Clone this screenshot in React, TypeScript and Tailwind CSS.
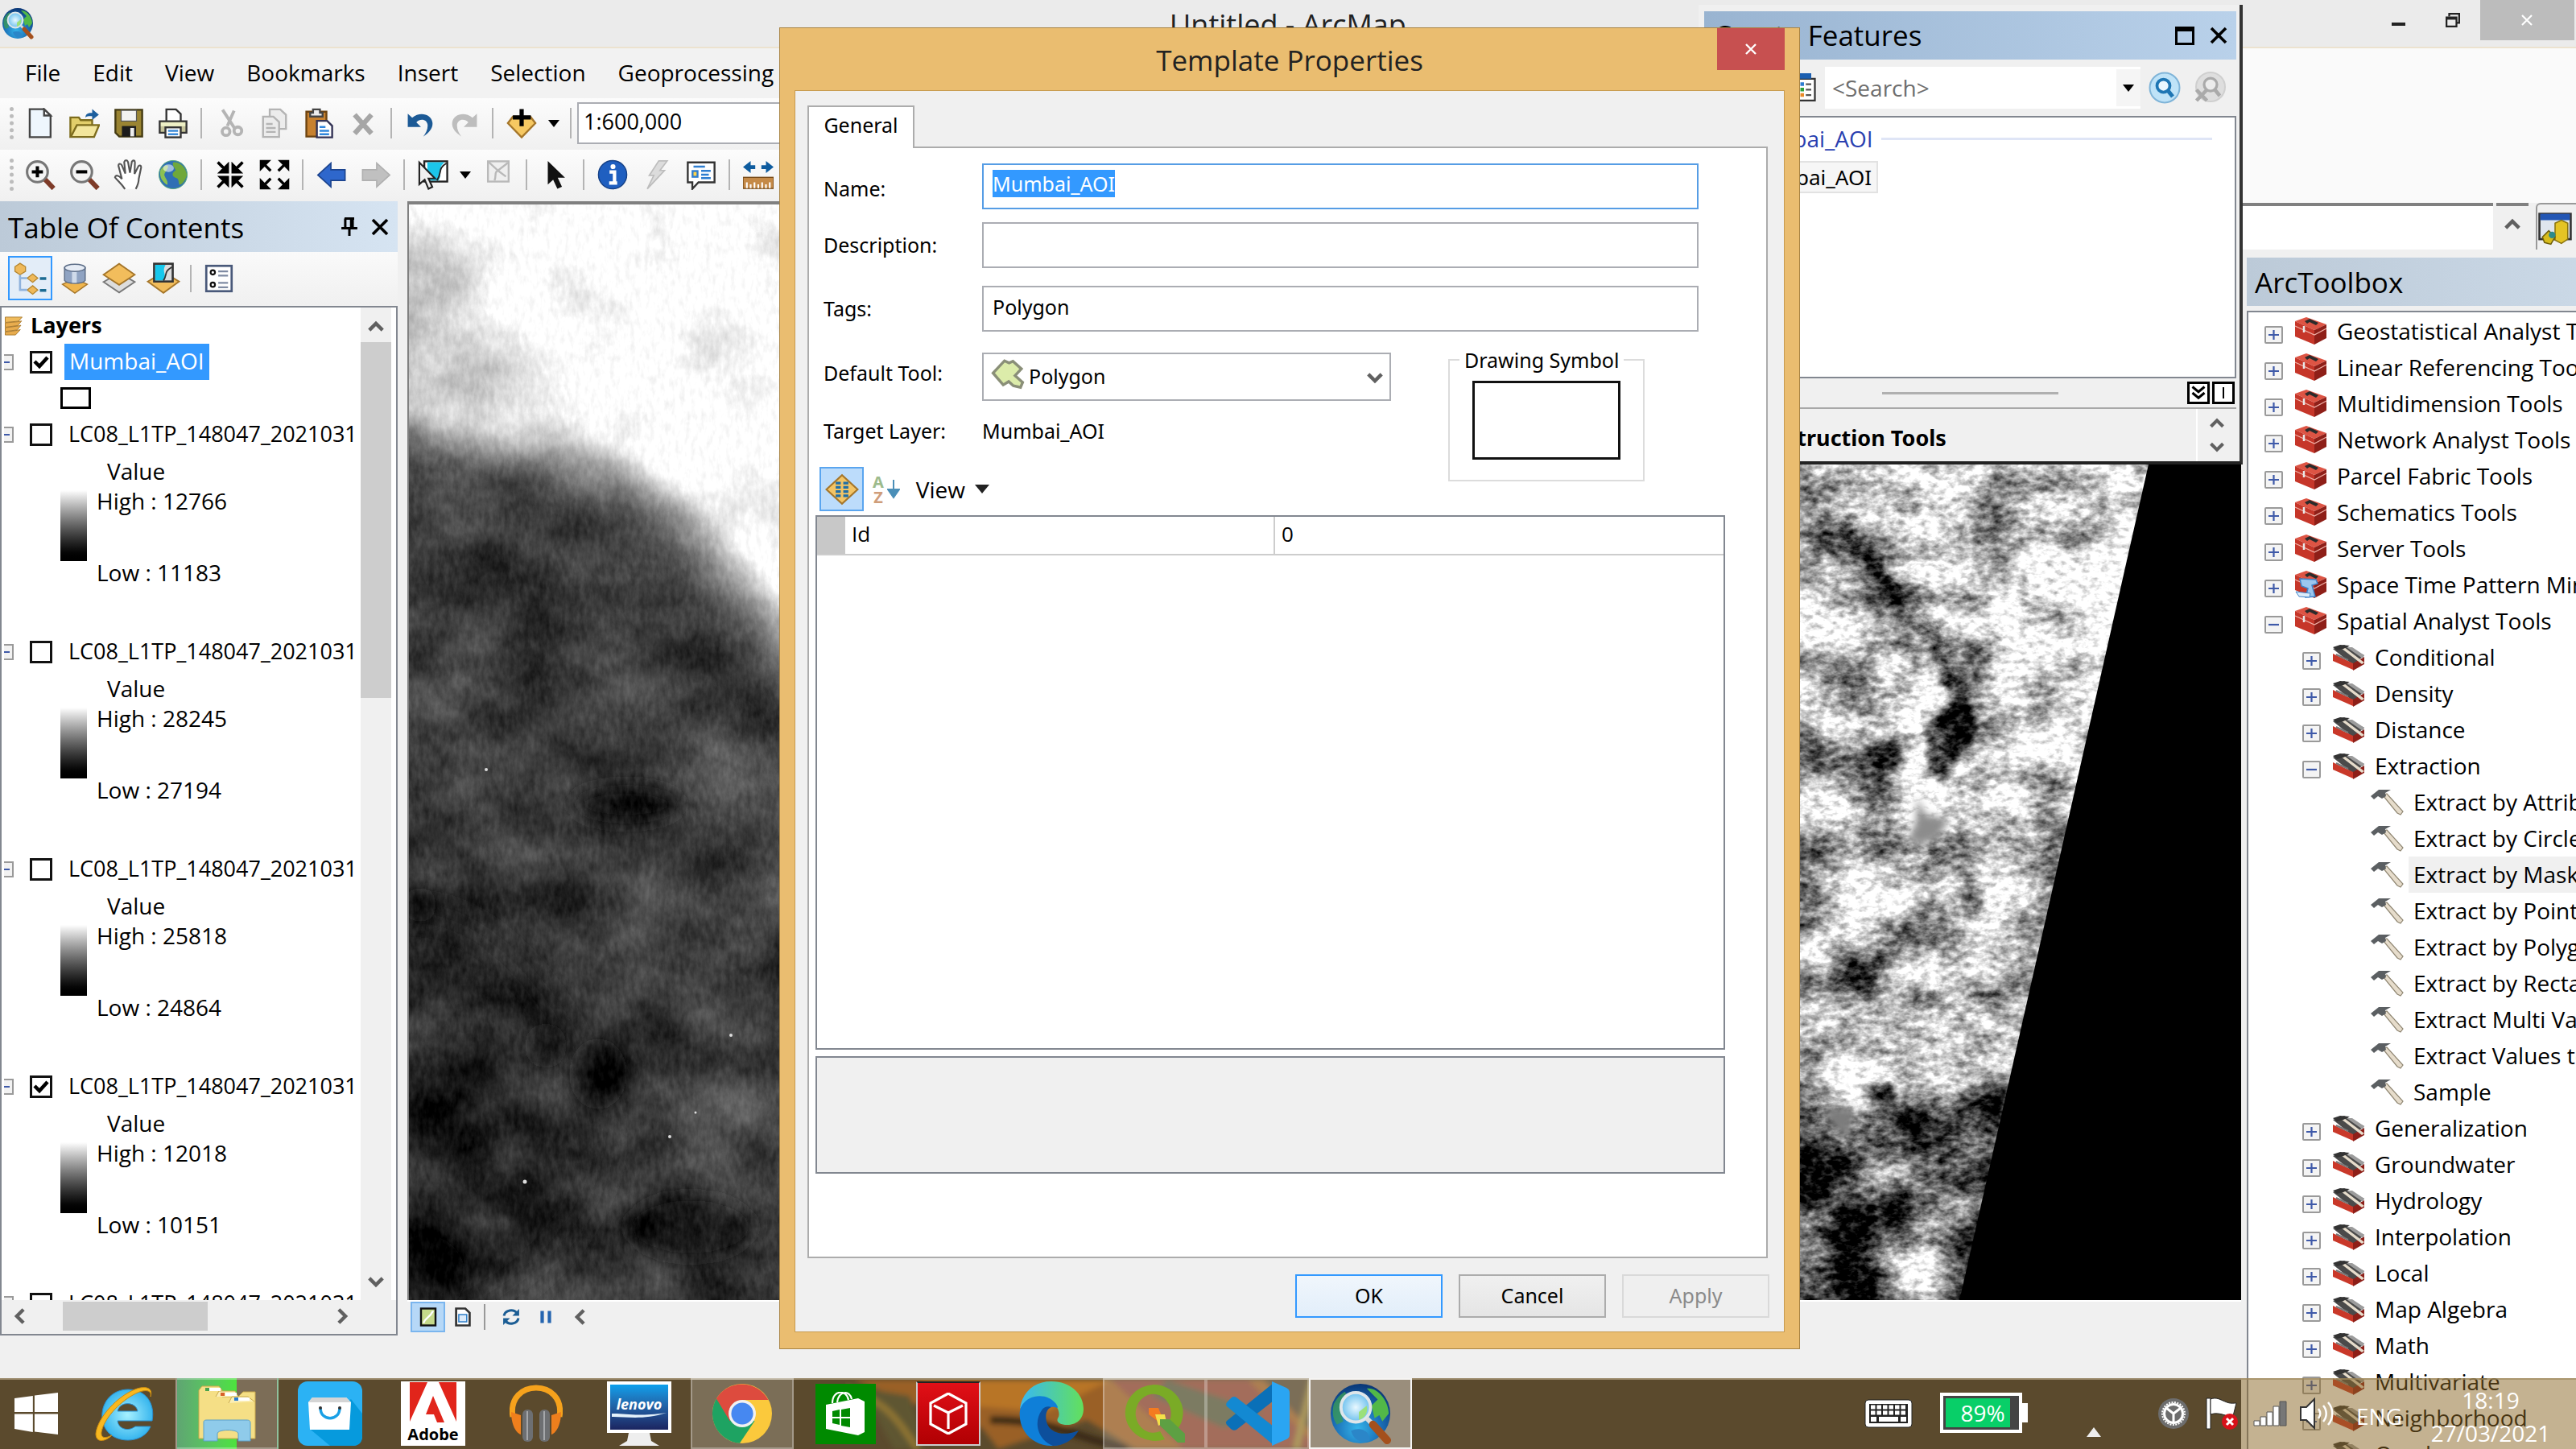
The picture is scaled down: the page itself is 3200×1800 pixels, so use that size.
import React, { useEffect, useRef } from "react";

type Kids = { children?: React.ReactNode };

/* ---------- small shared glyphs ---------- */

function Svg({ size = 36, box = 16, children }: Kids & { size?: number; box?: number }) {
  return (
    <svg width={size} height={size} viewBox={`0 0 ${box} ${box}`} aria-hidden="true" className="block shrink-0">
      {children}
    </svg>
  );
}

function Chevron({ dir, size = 20 }: { dir: "up" | "down" | "left" | "right"; size?: number }) {
  const d = {
    up: "M2 11 L8 5 L14 11",
    down: "M2 5 L8 11 L14 5",
    left: "M11 2 L5 8 L11 14",
    right: "M5 2 L11 8 L5 14",
  }[dir];
  return (
    <Svg size={size}>
      <path d={d} fill="none" stroke="#606060" strokeWidth="3.2" />
    </Svg>
  );
}

function Caret() {
  return (
    <svg width="14" height="9" viewBox="0 0 14 9" aria-hidden="true">
      <path d="M0 0H14L7 9Z" fill="#000" />
    </svg>
  );
}

function Cross({ size = 20, color = "#000", w = 2.4 }: { size?: number; color?: string; w?: number }) {
  return (
    <Svg size={size}>
      <path d="M2 2L14 14M14 2L2 14" stroke={color} strokeWidth={w} />
    </Svg>
  );
}

function Expander({ open }: { open?: boolean }) {
  return (
    <Svg size={23} box={23}>
      <rect x="1" y="2" width="21" height="20" rx="1" fill="#f4f4f4" stroke="#9a9a9a" strokeWidth="2" />
      <path d={open ? "M5 12H18" : "M5 12H18M11.5 6V18"} stroke="#3f5aa9" strokeWidth="2.2" />
    </Svg>
  );
}

/* ---------- toolbar icons ---------- */

const icons: Record<string, React.ReactNode> = {
  new: (
    <>
      <path d="M2.5 .7H10L13.4 4V15.3H2.5Z" fill="#eef6fd" stroke="#444" />
      <path d="M10 .7V4H13.4Z" fill="#fff" stroke="#444" />
    </>
  ),
  open: (
    <>
      <path d="M.6 15V5H5L6 6.4H12V15Z" fill="#e2ce6a" stroke="#7d6c1c" />
      <path d="M.8 15.2L4 9H15.6L13 15.2Z" fill="#f3e69c" stroke="#7d6c1c" />
      <path d="M8.5 5C8.5 3 10 2.5 12 2.6V.6L15.5 3.6L12 6.3V4.4C10.5 4.3 9.3 4.4 8.5 5Z" fill="#1d5f9e" />
    </>
  ),
  save: (
    <>
      <path d="M1 1H15V15H3L1 13Z" fill="#9a8432" stroke="#433a12" />
      <rect x="4" y="1.3" width="8" height="5.6" fill="#f2f2f2" stroke="#555" strokeWidth=".5" />
      <rect x="4.4" y="9.5" width="7.4" height="5.5" fill="#1c1c1c" />
      <rect x="8.8" y="10.5" width="2" height="4.4" fill="#eee" />
    </>
  ),
  print: (
    <>
      <path d="M4.5 7V.8H9.5L12 3.2V7" fill="#fff" stroke="#333" />
      <path d="M1 7H15V13H1Z" fill="#c6c49a" stroke="#333" />
      <rect x="1.6" y="7.6" width="12.8" height="2" fill="#eef0c6" />
      <rect x="4" y="10.2" width="8" height="5.2" fill="#fff" stroke="#333" />
      <path d="M5.4 12H10.6M5.4 13.8H10.6" stroke="#3b8ad8" />
    </>
  ),
  cut: (
    <g fill="none" stroke="#b4b4b4" strokeWidth="1.6">
      <path d="M4 1L10.5 11M10 1.5L6.5 9.5" />
      <circle cx="5.8" cy="12.4" r="2" />
      <circle cx="12" cy="12" r="2" />
    </g>
  ),
  copy: (
    <g fill="#ececec" stroke="#b4b4b4">
      <path d="M5.5 .8H11L14 3.6V11H5.5Z" />
      <path d="M2 4.6H7.4L10.4 7.4V15.2H2Z" />
      <path d="M3.6 8.4H7M3.6 10.5H8.6M3.6 12.6H8.6" />
    </g>
  ),
  paste: (
    <>
      <path d="M1.5 2H12V15H1.5Z" fill="#c7812f" stroke="#6d4310" />
      <path d="M3.5 4.5V2.5H5V.8H8.6V2.5H10V4.5Z" fill="#eee" stroke="#444" />
      <path d="M7 6.8H12.4L15 9.4V15.4H7Z" fill="#fff" stroke="#335" />
      <path d="M8.4 10H11.5M8.4 12H13.4M8.4 13.8H13.4" stroke="#2f86db" />
    </>
  ),
  del: <path d="M3.6 3.6L12.4 13.4M12.4 3.6L3.6 13.4" stroke="#a6a6a6" strokeWidth="2.6" />,
  undo: (
    <path d="M1.5 3V10H8.4L6 7.6C8 5.2 12 6 11.9 9.4C11.9 11.4 10.9 13.3 9.6 15C13 12.8 14.8 10.4 14.4 7.6C13.8 3.4 8 1.6 3.8 5.2Z" fill="#1c5a96" />
  ),
  redo: (
    <path d="M14.5 3V10H7.6L10 7.6C8 5.2 4 6 4.1 9.4C4.1 11.4 5.1 13.3 6.4 15C3 12.8 1.2 10.4 1.6 7.6C2.2 3.4 8 1.6 12.2 5.2Z" fill="#bdbdbd" />
  ),
  add: (
    <>
      <path d="M.8 8L3.4 4.6H12.6L15.2 8L8 15.4Z" fill="#f6c862" stroke="#a5762a" />
      <path d="M8 .6V9.6M3.4 5H12.8" stroke="#000" strokeWidth="2.2" />
    </>
  ),
  zoomin: (
    <>
      <circle cx="6.5" cy="6.5" r="5.4" fill="#f4f4f4" stroke="#777" strokeWidth="1.3" />
      <path d="M6.5 3.6V9.4M3.6 6.5H9.4" stroke="#000" strokeWidth="1.7" />
      <path d="M10.6 10.6L15 15.2" stroke="#7e3b28" strokeWidth="2.5" />
    </>
  ),
  zoomout: (
    <>
      <circle cx="6.5" cy="6.5" r="5.4" fill="#f4f4f4" stroke="#777" strokeWidth="1.3" />
      <path d="M3.6 6.5H9.4" stroke="#000" strokeWidth="1.7" />
      <path d="M10.6 10.6L15 15.2" stroke="#7e3b28" strokeWidth="2.5" />
    </>
  ),
  pan: (
    <path
      d="M6 15.5C4 12.6 2.4 11.4 .8 9.4C1 8 2.6 8.2 4.4 10.2L2.6 3.4C2.6 2 3.8 2 4.4 3.2L6.2 7.4L5.6 1.4C6 .2 7.2.2 7.6 1.4L8.6 7L9.6 1.2C10.2.2 11.2.4 11.2 1.6L11 7.6L13 3.6C13.8 2.8 14.6 3.2 14.4 4.4L13.2 10.2C13.2 12.6 12.4 14 11.6 15.5"
      fill="#fff"
      stroke="#555"
      strokeWidth=".9"
    />
  ),
  globe: (
    <>
      <circle cx="8" cy="8" r="7.4" fill="#2f6fb4" stroke="#5a7" strokeWidth=".4" />
      <path d="M8 1.6C11 .8 14.8 4 15.2 8C14.6 11 12.8 13 11.4 13.4C10.6 12 11.4 10 9.2 9.6C7 8.6 7.6 6.6 9.4 5.8C9 4.4 7.4 3.6 8 1.6Z" fill="#6fa83a" />
      <path d="M1.4 5.6C3 3.4 4.6 2.6 5.4 3.4C5.6 5 4 6 3.4 8C3.8 10 5.6 11 5 13.4C2.6 12 .6 9.4 1.4 5.6Z" fill="#8cc152" />
      <ellipse cx="5.6" cy="4.6" rx="2.8" ry="2" fill="#fff" opacity=".55" />
    </>
  ),
  fixin: (
    <path d="M1.500 1.500L5 5M6.600 3V6.600H3ZM14.500 1.500L11 5M9.400 3V6.600H13ZM1.500 14.500L5 11M6.600 13V9.400H3ZM14.500 14.500L11 11M9.400 13V9.400H13Z" fill="#000" stroke="#000" strokeWidth="1.5" />
  ),
  fixout: (
    <path d="M2.500 2.500L6 6M1 4.600V1H4.600ZM13.500 2.500L10 6M15 4.600V1H11.400ZM2.500 13.500L6 10M1 11.400V15H4.600ZM13.500 13.500L10 10M15 11.400V15H11.400Z" fill="#000" stroke="#000" strokeWidth="1.4" />
  ),
  back: <path d="M.8 8.2L7.6 2V5.4H15V11H7.6V14.4Z" fill="#2e67cc" stroke="#1c448e" strokeWidth=".7" />,
  fwd: <path d="M15.2 8.2L8.4 2V5.4H1V11H8.4V14.4Z" fill="#c0c0c0" stroke="#b0b0b0" strokeWidth=".7" />,
  select: (
    <>
      <rect x="3.4" y="1" width="12" height="10.6" fill="#fff" stroke="#222" />
      <path d="M5 1.5H14C10 5 13 7 11 11H5Z" fill="#1cc6ea" />
      <path d="M10 11C13 7 10 5 15 2" fill="none" stroke="#222" strokeWidth=".8" />
      <path d="M.8 1.6L.8 13L3.6 10.6L5.6 15.4L7.6 14.4L5.6 10H9Z" fill="#f0f0f0" stroke="#222" strokeWidth=".9" />
    </>
  ),
  clear: (
    <>
      <rect x="2.6" y="1" width="10.8" height="10.6" fill="#efefef" stroke="#b9b9b9" />
      <path d="M3 1.4L8 6M13 1.8L7 6.4C6 8 7 9 6 11M8 6L12 9" fill="none" stroke="#b9b9b9" />
    </>
  ),
  pointer: <path d="M4 .8V13.2L6.8 10.6L9 15.4L11.4 14.3L9.2 9.6H13Z" fill="#111" />,
  info: (
    <>
      <circle cx="8" cy="8" r="7.4" fill="#1f5fc0" stroke="#174287" strokeWidth=".6" />
      <path d="M6.4 6.6H9V12M6.2 12.4H10.4" stroke="#fff" strokeWidth="1.8" fill="none" />
      <circle cx="8.2" cy="3.8" r="1.3" fill="#fff" />
    </>
  ),
  bolt: <path d="M9 .8H13.4L9.6 5.8H12L3 15.4L6.4 8.4H4Z" fill="#dcdcdc" stroke="#bdbdbd" strokeWidth=".7" />,
  html: (
    <>
      <path d="M1 1.6H15V12H6.6L3.4 15.4V12H1Z" fill="#fff" stroke="#333" />
      <rect x="3" y="5.6" width="3.6" height="4" fill="#2d7dd0" />
      <rect x="4" y="6.6" width="1.6" height="2" fill="#ffd34a" />
      <path d="M4 3.8H10M8 6H13M8 8H12M8 9.8H13" stroke="#2d7dd0" />
    </>
  ),
  measure: (
    <>
      <path d="M0 4L4 .8V3H6.4V5H4V7.2ZM16 4L12 .8V3H9.6V5H12V7.2Z" fill="#0e5c9f" />
      <rect x="0" y="9.4" width="16" height="5.8" fill="#c58a48" stroke="#7a4d1a" strokeWidth=".6" />
      <path d="M2 15V12M4 15V13M6 15V12M8 15V13M10 15V12M12 15V13M14 15V12" stroke="#fff" strokeWidth=".9" />
    </>
  ),
};

type ToolItem = { icon: string; label: string } | "sep" | "caret";

const standardTools: ToolItem[] = [
  { icon: "new", label: "New" },
  { icon: "open", label: "Open" },
  { icon: "save", label: "Save" },
  { icon: "print", label: "Print" },
  "sep",
  { icon: "cut", label: "Cut" },
  { icon: "copy", label: "Copy" },
  { icon: "paste", label: "Paste" },
  { icon: "del", label: "Delete" },
  "sep",
  { icon: "undo", label: "Undo" },
  { icon: "redo", label: "Redo" },
  "sep",
  { icon: "add", label: "Add Data" },
  "caret",
  "sep",
];

const navTools: ToolItem[] = [
  { icon: "zoomin", label: "Zoom In" },
  { icon: "zoomout", label: "Zoom Out" },
  { icon: "pan", label: "Pan" },
  { icon: "globe", label: "Full Extent" },
  "sep",
  { icon: "fixin", label: "Fixed Zoom In" },
  { icon: "fixout", label: "Fixed Zoom Out" },
  "sep",
  { icon: "back", label: "Previous Extent" },
  { icon: "fwd", label: "Next Extent" },
  "sep",
  { icon: "select", label: "Select Features" },
  "caret",
  { icon: "clear", label: "Clear Selection" },
  "sep",
  { icon: "pointer", label: "Select Elements" },
  "sep",
  { icon: "info", label: "Identify" },
  { icon: "bolt", label: "Hyperlink" },
  { icon: "html", label: "HTML Popup" },
  "sep",
  { icon: "measure", label: "Measure" },
];

function Toolbar({ items, children }: Kids & { items: ToolItem[] }) {
  return (
    <div className="flex h-[64px] items-center bg-gradient-to-b from-[#fcfcfc] to-[#f0f0f0] pb-[2px] pl-[12px]">
      <div className="h-[40px] w-[10px] border-l-[5px] border-dotted border-[#bcbcbc]" />
      {items.map((t, i) =>
        t === "sep" ? (
          <div key={i} className="flex w-[16px] justify-center">
            <div className="h-[38px] w-[2px] bg-[#b4b4b4]" />
          </div>
        ) : t === "caret" ? (
          <button key={i} aria-label="More" className="flex w-[26px] justify-center">
            <Caret />
          </button>
        ) : (
          <button key={i} aria-label={t.label} className="flex w-[55px] justify-center">
            <Svg size={38}>{icons[t.icon]}</Svg>
          </button>
        )
      )}
      {children}
    </div>
  );
}

/* ---------- app globe with lens ---------- */

function ArcGlobe({ size, id }: { size: number; id: string }) {
  return (
    <Svg size={size} box={40}>
      <defs>
        <radialGradient id={id + "g"} cx=".45" cy=".75" r=".8">
          <stop offset="0" stopColor="#35b4ea" />
          <stop offset=".5" stopColor="#1a6db5" />
          <stop offset="1" stopColor="#082e6c" />
        </radialGradient>
        <radialGradient id={id + "l"}>
          <stop offset="0" stopColor="#e9f8ff" />
          <stop offset="1" stopColor="#6cc0ee" />
        </radialGradient>
      </defs>
      <circle cx="20" cy="20" r="19" fill={`url(#${id}g)`} />
      <path d="M24 4C31 3 38 12 38 20L34 25L32 21L29 23L27 15L31 11Z" fill="#52b848" />
      <path d="M3 14C5 10 7 8 10 6L12 9L7 17L9 25L5 27C2 23 2 18 3 14Z" fill="#3a9a5a" opacity=".8" />
      <path d="M14 31C20 28 26 31 26 37C22 39 16 38 14 31Z" fill="#2b86c8" />
      <circle cx="17" cy="16" r="9.4" fill={`url(#${id}l)`} stroke="#dfe6ea" strokeWidth="2" />
      <path d="M19 19L24 15C25 19 23 23 19 24Z" fill="#9be07a" />
      <path d="M24 23L28 27" stroke="#dcdcdc" strokeWidth="3" />
      <path d="M28 27L37 37" stroke="#a4501d" strokeWidth="5" strokeLinecap="round" />
    </Svg>
  );
}

/* ---------- table of contents ---------- */

function LayerCheck({ checked, name }: { checked?: boolean; name: string }) {
  return (
    <span className="grid shrink-0">
      <input
        type="checkbox"
        aria-label={name}
        defaultChecked={checked}
        className="peer col-start-1 row-start-1 size-[28px] appearance-none border-[3px] border-[#111] bg-white"
      />
      <svg viewBox="0 0 28 28" className="pointer-events-none col-start-1 row-start-1 size-[28px] opacity-0 peer-checked:opacity-100" aria-hidden="true">
        <path d="M6 13L12 19L22 8" fill="none" stroke="#000" strokeWidth="4.5" />
      </svg>
    </span>
  );
}

function TreeRow({ children }: Kids) {
  return <div className="flex h-[45px] items-center whitespace-nowrap">{children}</div>;
}

function HalfExpander() {
  return (
    <svg width="12" height="22" viewBox="0 0 12 22" className="mr-[20px] shrink-0" aria-hidden="true">
      <path d="M0 2H11V20H0" fill="#f2f2f2" stroke="#9a9a9a" strokeWidth="2" />
      <path d="M0 11H7" stroke="#3f5aa9" strokeWidth="2" />
    </svg>
  );
}

const RASTER = "LC08_L1TP_148047_2021031";
const rasters = [
  { high: "12766", low: "11183" },
  { high: "28245", low: "27194" },
  { high: "25818", low: "24864" },
  { high: "12018", low: "10151", on: true },
  { high: "12018", low: "10151" },
];

function RasterLayer({ high, low, on }: { high: string; low: string; on?: boolean }) {
  return (
    <div className="h-[270px]">
      <TreeRow>
        <HalfExpander />
        <LayerCheck checked={on} name={RASTER} />
        <span className="pl-[20px] text-[27px]">{RASTER}</span>
      </TreeRow>
      <TreeRow>
        <span className="pl-[128px]">Value</span>
      </TreeRow>
      <div className="flex h-[119px] gap-[12px] pl-[70px]">
        <div className="mt-[2px] h-[88px] w-[33px] bg-gradient-to-b from-white to-black" />
        <div className="flex flex-col justify-between leading-[30px]">
          <span>High : {high}</span>
          <span>Low : {low}</span>
        </div>
      </div>
    </div>
  );
}

function TocToolbar() {
  return (
    <div className="flex h-[67px] items-center bg-gradient-to-b from-[#fafafa] to-[#f0f0f0] pb-[2px] pl-[10px]">
      <button aria-label="List By Drawing Order" className="flex size-[55px] items-center justify-center border-2 border-[#3399ff] bg-[#e3edf8]">
        <Svg size={42}>
          <g fill="#efb95a" stroke="#b5862f" strokeWidth=".5">
            <path d="M3 .8L5.6 2.4V4.6L3 6.2L.6 4.6V2.4Z" />
            <path d="M6.4 7.8L9 5.8L11.4 7.8L9 9.8ZM6.4 13.4L9 11.4L11.4 13.4L9 15.4Z" />
          </g>
          <path d="M3 6.4V13.4H6.4M3 7.8H6.4" fill="none" stroke="#8fb2dc" />
          <path d="M12.4 8H15.4M12.4 13.6H15.4" stroke="#1c6b93" strokeWidth="1.3" />
        </Svg>
      </button>
      <button aria-label="List By Source" className="flex w-[55px] justify-center">
        <Svg size={38}>
          <path d="M1.5 11L8 8L14.5 11L8 15.6Z" fill="#f0b64e" stroke="#a5762a" strokeWidth=".6" />
          <path d="M2.6 2.2V9C4 11 12 11 13.4 9V2.2Z" fill="#8fa3c2" stroke="#5b6c86" strokeWidth=".6" />
          <ellipse cx="8" cy="2.4" rx="5.4" ry="1.9" fill="#e6ecf5" stroke="#5b6c86" strokeWidth=".6" />
          <path d="M6.5 4.6H9V10.3H6.5Z" fill="#dfe8f4" opacity=".8" />
        </Svg>
      </button>
      <button aria-label="List By Visibility" className="flex w-[55px] justify-center">
        <Svg size={42}>
          <path d="M.6 9.6L8 5.4L15.4 9.6L8 14.6Z" fill="#ddd" stroke="#777" strokeWidth=".7" />
          <path d="M.6 6.2L8 1L15.4 6.2L8 11Z" fill="#f2bd5c" stroke="#a5762a" strokeWidth=".7" />
        </Svg>
      </button>
      <button aria-label="List By Selection" className="flex w-[55px] justify-center">
        <Svg size={42}>
          <path d="M.6 9.4L8 5L15.4 9.4L8 14.8Z" fill="#f2bd5c" stroke="#a5762a" strokeWidth=".7" />
          <rect x="3.6" y="1" width="8.8" height="8.4" fill="#ddd" stroke="#333" />
          <path d="M4.1 1.5H9C7 5 10 6 8 8.9H4.1Z" fill="#17c8ec" />
          <path d="M8 9C10 6 8 5 12 2.6" stroke="#333" fill="none" strokeWidth=".7" />
        </Svg>
      </button>
      <div className="mx-[6px] h-[34px] w-[2px] bg-[#b4b4b4]" />
      <button aria-label="Options" className="flex w-[55px] justify-center">
        <Svg size={36}>
          <rect x="1" y="1" width="14" height="14" fill="#fff" stroke="#49597a" strokeWidth="1.2" />
          <circle cx="4.6" cy="4.6" r="1.2" fill="none" stroke="#111" />
          <circle cx="4.6" cy="11.4" r="1.2" fill="none" stroke="#111" />
          <path d="M7.6 4H13M7.6 6.4H13M7.6 10.4H13M7.6 12.8H13" stroke="#7f8ba3" />
        </Svg>
      </button>
    </div>
  );
}

function TableOfContents() {
  return (
    <aside className="flex h-full w-[494px] shrink-0 flex-col">
      <header className="flex h-[63px] shrink-0 items-center bg-gradient-to-r from-[#bccad8] to-[#d6e4f2] pl-[10px] pr-[10px]">
        <h2 className="flex-1 whitespace-nowrap pt-[2px] text-[35px] leading-[44px]">Table Of Contents</h2>
        <button aria-label="Auto Hide" className="mr-[14px]">
          <Svg size={24}>
            <path d="M4 1H12M4.6 1V8.6M10.6 1V8.6M1.4 9H14.6M8 9V15.4" stroke="#000" strokeWidth="2" fill="none" />
            <path d="M10 1V9" stroke="#000" strokeWidth="3" />
          </Svg>
        </button>
        <button aria-label="Close Table Of Contents">
          <Cross size={24} />
        </button>
      </header>
      <TocToolbar />
      <div className="flex min-h-0 flex-1 flex-col border-2 border-[#828790] bg-white">
        <div className="flex min-h-0 flex-1">
          <div className="min-w-0 flex-1 overflow-hidden pl-[3px]">
            <TreeRow>
              <Svg size={24}>
                <path d="M1 .6L15 .6L12 4L1 5Z" fill="#f0bb5c" stroke="#a5762a" strokeWidth=".6" />
                <path d="M1 5.400L12 4.400L14.500 3.800L11.500 7.600L1 9ZM1 9.400L11.500 8L14 7.400L11 11.200L1 12.500ZM1 13L11 11.600L13.500 11L9.500 15.400L1 15.400Z" fill="#e8ac4e" stroke="#a5762a" strokeWidth=".6" />
              </Svg>
              <span className="pl-[9px] text-[27px] font-bold">Layers</span>
            </TreeRow>
            <TreeRow>
              <HalfExpander />
              <LayerCheck checked name="Mumbai_AOI" />
              <span className="ml-[15px] h-[45px] bg-[#3399ff] px-[6px] leading-[43px] text-white">Mumbai_AOI</span>
            </TreeRow>
            <TreeRow>
              <span className="ml-[70px] h-[27px] w-[38px] border-[3px] border-black" />
            </TreeRow>
            {rasters.map((r, i) => (
              <RasterLayer key={i} {...r} />
            ))}
          </div>
          <div className="flex w-[38px] shrink-0 flex-col items-center bg-[#f0f0f0] pt-[13px]">
            <Chevron dir="up" size={22} />
            <div className="mt-[8px] h-[442px] w-full bg-[#cdcdcd]" />
            <div className="flex-1" />
            <div className="pb-[12px]">
              <Chevron dir="down" size={22} />
            </div>
          </div>
          <div className="w-[6px]" />
        </div>
        <div className="flex h-[42px] shrink-0 items-center bg-[#f0f0f0] pb-[2px] pl-[12px] pr-[56px]">
          <Chevron dir="left" size={22} />
          <div className="ml-[42px] h-[36px] w-[180px] bg-[#cdcdcd]" />
          <div className="flex-1" />
          <Chevron dir="right" size={22} />
        </div>
      </div>
    </aside>
  );
}

/* ---------- satellite raster ---------- */

const GRAY = "1 0 0 0 0 1 0 0 0 0 1 0 0 0 0 0 0 0 0 1";

function MapImage() {
  return (
    <svg viewBox="0 0 2276 1362" preserveAspectRatio="xMinYMin slice" className="block h-full w-full" aria-label="Satellite raster">
      <defs>
        <filter id="sea" x="0" y="0" width="1" height="1" colorInterpolationFilters="sRGB">
          <feTurbulence type="fractalNoise" baseFrequency="0.009 0.012" numOctaves="6" seed="7" result="n1" />
          <feColorMatrix in="n1" values={GRAY} result="g1" />
          <feTurbulence type="fractalNoise" baseFrequency="0.16 0.07" numOctaves="3" seed="3" result="n2" />
          <feColorMatrix in="n2" values={GRAY} result="g2" />
          <feComposite in="SourceGraphic" in2="g1" operator="arithmetic" k1="0" k2="1" k3="0.42" k4="-0.21" result="a" />
          <feComposite in="a" in2="g2" operator="arithmetic" k1="0" k2="1" k3="0.15" k4="-0.075" />
        </filter>
        <filter id="land" x="0" y="0" width="1" height="1" colorInterpolationFilters="sRGB">
          <feTurbulence type="fractalNoise" baseFrequency="0.013 0.018" numOctaves="6" seed="11" result="n1" />
          <feColorMatrix in="n1" values={GRAY} result="g1" />
          <feTurbulence type="fractalNoise" baseFrequency="0.09 0.14" numOctaves="3" seed="5" result="n2" />
          <feColorMatrix in="n2" values={GRAY} result="g2" />
          <feComposite in="SourceGraphic" in2="g1" operator="arithmetic" k1="0" k2="1" k3="1.5" k4="-0.75" result="a" />
          <feComposite in="a" in2="g2" operator="arithmetic" k1="0" k2="1" k3="0.8" k4="-0.4" />
        </filter>
        <filter id="b24" x="-.5" y="-.5" width="2" height="2"><feGaussianBlur stdDeviation="24" /></filter>
        <filter id="b12" x="-.5" y="-.5" width="2" height="2"><feGaussianBlur stdDeviation="11" /></filter>
        <filter id="b4" x="-.5" y="-.5" width="2" height="2"><feGaussianBlur stdDeviation="5" /></filter>
        <clipPath id="swath"><path d="M1000 0H2234L1926 1362H1000Z" /></clipPath>
        <clipPath id="west"><rect width="1000" height="1362" /></clipPath>
      </defs>
      <rect width="2276" height="1362" fill="#000" />
      <g clipPath="url(#west)">
        <g filter="url(#sea)">
          <rect width="1000" height="1362" fill="#3a3a3a" />
          <path d="M-80 290C100 330 200 320 300 400C400 480 470 600 560 740L700 740V-80H-80Z" fill="#7c7c7c" filter="url(#b24)" />
          <path d="M-80 230C60 290 170 290 270 335C370 385 430 470 520 590L800 590V-120H-80Z" fill="#f4f4f4" filter="url(#b24)" />
          <path d="M150 -60H1000V480H480C380 360 280 300 180 260C130 200 160 100 20 -60Z" fill="#fff" stroke="#fff" strokeWidth="20" filter="url(#b12)" />
          <path d="M-60 30C30 40 50 60 70 110C90 150 90 200 120 260C60 270 20 240 -60 230Z" fill="#bcbcbc" filter="url(#b24)" />
          <path d="M-60 900C60 820 200 980 240 1140C260 1260 120 1400 -60 1420Z" fill="#282828" filter="url(#b24)" />
          <path d="M330 640C400 600 460 740 520 800L480 900C400 860 330 760 330 640Z" fill="#4e4e4e" filter="url(#b24)" />
          <ellipse cx="235" cy="1080" rx="36" ry="44" fill="#0c0c0c" filter="url(#b12)" />
          <ellipse cx="170" cy="1045" rx="26" ry="28" fill="#101010" filter="url(#b12)" />
          <ellipse cx="270" cy="745" rx="70" ry="24" fill="#1c1c1c" filter="url(#b12)" />
          <ellipse cx="350" cy="1270" rx="80" ry="40" fill="#161616" filter="url(#b12)" />
          <ellipse cx="20" cy="1330" rx="50" ry="50" fill="#0a0a0a" filter="url(#b12)" />
          <ellipse cx="14" cy="870" rx="20" ry="22" fill="#0a0a0a" filter="url(#b12)" />
        </g>
        <g fill="#ddd">
          <circle cx="144" cy="1380" r="2" />
          <circle cx="144" cy="1214" r="2.500" />
          <circle cx="400" cy="1032" r="2" />
          <circle cx="324" cy="1158" r="2" />
          <circle cx="96" cy="702" r="2" />
          <circle cx="356" cy="1128" r="1.500" />
        </g>
      </g>
      <g clipPath="url(#swath)">
        <g filter="url(#land)">
          <rect x="1000" width="1276" height="1362" fill="#c4c4c4" />
          <path d="M1930 420L2150 400L2080 660L1960 740Z" fill="#f6f6f6" filter="url(#b24)" />
          <path d="M1720 320L1950 330L1930 400L1850 420L1780 340Z" fill="#fff" filter="url(#b24)" />
          <path d="M1960 340L2060 340L2040 400L1960 400Z" fill="#a8a8a8" filter="url(#b24)" />
          <path d="M1770 350C1780 420 1840 460 1870 520C1900 520 1920 560 1930 600" fill="none" stroke="#727272" strokeWidth="56" filter="url(#b24)" />
          <path d="M1790 385L1788 408L1815 446L1845 480L1856 510L1895 526L1905 560L1916 600" fill="none" stroke="#0c0c0c" strokeWidth="13" filter="url(#b4)" />
          <path d="M1888 645L1912 632L1930 606L1942 650L1924 680L1906 712L1890 706Z" fill="#000" stroke="#000" strokeWidth="10" filter="url(#b4)" />
          <path d="M1814 680L1846 668L1850 700L1826 706Z" fill="#000" stroke="#000" strokeWidth="10" filter="url(#b4)" />
          <path d="M1730 640C1800 640 1850 700 1830 790" fill="none" stroke="#8a8a8a" strokeWidth="36" filter="url(#b24)" />
          <path d="M1920 850L1950 834L1960 870L1940 890Z" fill="#181818" filter="url(#b12)" />
          <path d="M1760 900L1790 950L1830 940L1812 990Z" fill="#181818" stroke="#303030" strokeWidth="14" filter="url(#b12)" />
          <path d="M1980 866L2050 876L2030 900L1990 890Z" fill="#606060" filter="url(#b12)" />
          <path d="M1690 1150C1760 1110 1900 1120 1990 1090L1960 1400H1690Z" fill="#565656" filter="url(#b12)" />
          <path d="M1700 1190C1760 1200 1810 1260 1830 1362H1700Z" fill="#0c0c0c" filter="url(#b24)" />
          <ellipse cx="1828" cy="1104" rx="20" ry="12" fill="#000" filter="url(#b4)" />
          <path d="M1940 1050L2010 1060L1990 1100L1940 1080Z" fill="#606060" filter="url(#b12)" />
          <path d="M1840 1310L1900 1290L1900 1362H1830Z" fill="#bbb" filter="url(#b12)" />
        </g>
        <path d="M1874 738L1884 758L1914 764L1898 788L1876 796L1862 788L1872 768Z" fill="#8c8c8c" filter="url(#b4)" />
        <path d="M1756 1126L1796 1122L1788 1160L1770 1146Z" fill="#7c7c7c" filter="url(#b4)" />
      </g>
    </svg>
  );
}

function ViewBar() {
  return (
    <div className="flex h-[44px] shrink-0 items-center border-t-2 border-white bg-[#f0f0f0] pb-[4px] pl-[4px]">
      <button aria-label="Data View" className="flex h-[38px] w-[43px] items-center justify-center border-2 border-[#7ab5ee] bg-[#b6d8f7]">
        <Svg size={24}>
          <rect x="2" y="1" width="12" height="14" fill="#c5d98a" stroke="#111" strokeWidth="1.6" />
          <path d="M4 13C6 8 9 9 12 3" stroke="#fff" fill="none" strokeWidth="1.6" />
        </Svg>
      </button>
      <button aria-label="Layout View" className="flex w-[43px] justify-center">
        <Svg size={24}>
          <path d="M2.4 1H10L13.6 4.6V15H2.4Z" fill="#fff" stroke="#333" strokeWidth="1.8" />
          <rect x="4.6" y="6" width="6.6" height="6" fill="#dcebfa" stroke="#2f7fc8" />
        </Svg>
      </button>
      <div className="mx-[5px] h-[32px] w-[2px] bg-[#999]" />
      <button aria-label="Refresh" className="flex w-[54px] justify-center">
        <Svg size={24}>
          <path d="M2 7C3 2 10 1 13 5M14 9C13 14 6 15 3 11" fill="none" stroke="#1b5d94" strokeWidth="2" />
          <path d="M14.6 1.4V7H9ZM1.4 14.6V9H7Z" fill="#1b5d94" />
        </Svg>
      </button>
      <button aria-label="Pause Drawing" className="flex w-[32px] justify-center">
        <Svg size={20}>
          <path d="M4.4 2V14M11.6 2V14" stroke="#2565b0" strokeWidth="3.4" />
        </Svg>
      </button>
      <button aria-label="Scroll Left" className="flex w-[54px] justify-center">
        <Chevron dir="left" size={22} />
      </button>
    </div>
  );
}

/* ---------- ArcToolbox ---------- */

function ToolboxIcon({ script }: { script?: boolean }) {
  return (
    <svg width="41" height="35" viewBox="0 0 41 35" className="shrink-0" aria-hidden="true">
      <path d="M1 5L15 0L40 9L25 16Z" fill="#dd5444" />
      <path d="M1 5L25 16V34L1 24Z" fill="#c63629" />
      <path d="M25 16L40 9V26L25 34Z" fill="#8e1f18" />
      <path d="M1 11L25 22L40 14" fill="none" stroke="#f0b0a6" strokeWidth="1.3" />
      <path d="M13 5L19 2L30 7L27 10L19 6L16 8Z" fill="#2b2b2b" />
      <path d="M12 11V19" stroke="#e8e8e8" strokeWidth="2.5" />
      {script && (
        <>
          <path d="M7 10L27 11L29 16L22 18L26 32L14 33L17 22L9 19Z" fill="#9cc7ef" stroke="#3f83c9" strokeWidth="1.5" />
          <path d="M2 26L20 28L19 33L6 32Z" fill="#dcedfb" stroke="#3f83c9" />
        </>
      )}
    </svg>
  );
}

function ToolsetIcon() {
  return (
    <svg width="41" height="34" viewBox="0 0 41 34" className="shrink-0" aria-hidden="true">
      <path d="M1 6L15 1L40 14L26 26Z" fill="#4a4a4a" />
      <path d="M1 12L26 24V32L1 21Z" fill="#c93829" />
      <path d="M26 24L40 16V25L26 33Z" fill="#8e1f18" />
      <path d="M18 4L25 4L40 14L38 18Z" fill="#9c9c9c" />
      <path d="M11 5L15 4L40 23L37 25Z" fill="#e6dccb" />
      <path d="M1 4L10 1L22 2L14 6L6 8Z" fill="#333" />
      <path d="M5 13L20 20" stroke="#777" strokeWidth="2" />
    </svg>
  );
}

function HammerIcon() {
  return (
    <svg width="41" height="34" viewBox="0 0 41 34" className="shrink-0" aria-hidden="true">
      <path d="M15 8L20 6L40 28L37 32L33 30Z" fill="#e6dccb" stroke="#8f8672" strokeWidth="1.2" />
      <path d="M0 9L5 5L10 1L25 1L18 5L19 9L14 12L9 9L4 13Z" fill="#5b5f62" />
    </svg>
  );
}

type Node = { t: string; l: 0 | 1 | 2; open?: boolean; sel?: boolean; script?: boolean };

const tools: Node[] = [
  { t: "Geostatistical Analyst Tools", l: 0 },
  { t: "Linear Referencing Tools", l: 0 },
  { t: "Multidimension Tools", l: 0 },
  { t: "Network Analyst Tools", l: 0 },
  { t: "Parcel Fabric Tools", l: 0 },
  { t: "Schematics Tools", l: 0 },
  { t: "Server Tools", l: 0 },
  { t: "Space Time Pattern Mining Tools", l: 0, script: true },
  { t: "Spatial Analyst Tools", l: 0, open: true },
  { t: "Conditional", l: 1 },
  { t: "Density", l: 1 },
  { t: "Distance", l: 1 },
  { t: "Extraction", l: 1, open: true },
  { t: "Extract by Attributes", l: 2 },
  { t: "Extract by Circle", l: 2 },
  { t: "Extract by Mask", l: 2, sel: true },
  { t: "Extract by Points", l: 2 },
  { t: "Extract by Polygon", l: 2 },
  { t: "Extract by Rectangle", l: 2 },
  { t: "Extract Multi Values to Points", l: 2 },
  { t: "Extract Values to Points", l: 2 },
  { t: "Sample", l: 2 },
  { t: "Generalization", l: 1 },
  { t: "Groundwater", l: 1 },
  { t: "Hydrology", l: 1 },
  { t: "Interpolation", l: 1 },
  { t: "Local", l: 1 },
  { t: "Map Algebra", l: 1 },
  { t: "Math", l: 1 },
  { t: "Multivariate", l: 1 },
  { t: "Neighborhood", l: 1 },
  { t: "Overlay", l: 1 },
];

const indent = ["pl-[20px]", "pl-[67px]", "pl-[152px]"];

function ArcToolbox() {
  return (
    <section className="flex w-[416px] shrink-0 flex-col overflow-hidden bg-[#f0f0f0]">
      <div className="h-[192px] shrink-0 bg-[#fafafa]" />
      <div className="flex h-[58px] shrink-0">
        <div className="flex-1 border-l-2 border-t-4 border-l-black border-t-[#808080] bg-white" />
        <div className="ml-[4px] flex w-[40px] justify-center border-t-4 border-[#808080] pt-[12px]">
          <Chevron dir="up" size={22} />
        </div>
        <button aria-label="Catalog" className="ml-[9px] flex w-[50px] items-center justify-center rounded-tl-md border-l-2 border-t-2 border-[#999] pr-[4px] pt-[4px]">
          <Svg size={42}>
            <rect x=".6" y="1" width="14.8" height="12" fill="#dfe6ee" stroke="#333" />
            <rect x="1" y="1" width="14" height="3" fill="#2356b4" />
            <path d="M8 5.4L11 4L14 5.4V13L11 15L8 13.4Z" fill="#e4c425" stroke="#8b7510" strokeWidth=".6" />
            <path d="M2 12L5 9L8 12L6 15.4L3 14.6Z" fill="#d8bc1c" stroke="#6f5f0c" strokeWidth=".6" />
            <circle cx="6.6" cy="11" r="1.6" fill="#2d8a8a" />
          </Svg>
        </button>
      </div>
      <header className="ml-[7px] mt-[10px] flex h-[60px] shrink-0 items-center bg-gradient-to-r from-[#bccad8] to-[#cad8e6] pl-[10px]">
        <h2 className="pt-[2px] text-[35px] leading-[44px]">ArcToolbox</h2>
      </header>
      <ul className="ml-[7px] mt-[6px] min-h-0 flex-1 overflow-hidden border-l-2 border-t-2 border-[#828790] bg-white pt-[1px]">
        {tools.map((n) => (
          <li key={n.t} className={`flex h-[45px] items-center whitespace-nowrap ${indent[n.l]}`}>
            {n.l < 2 && (
              <button aria-label={"Toggle " + n.t} className="mr-[14px] pt-[8px]">
                <Expander open={n.open} />
              </button>
            )}
            {n.l === 0 ? <ToolboxIcon script={n.script} /> : n.l === 1 ? <ToolsetIcon /> : <HammerIcon />}
            <span className={`ml-[6px] h-[45px] flex-1 pl-[6px] leading-[44px] ${n.sel ? "bg-[#f0f0f0]" : ""}`}>{n.t}</span>
          </li>
        ))}
      </ul>
    </section>
  );
}

/* ---------- floating windows ---------- */

function CreateFeatures() {
  return (
    <section className="absolute right-[414px] top-[6px] flex w-[676px] flex-col border-b-4 border-r-4 border-b-[#222] border-r-[#333] bg-[#f0f0f0] pl-[7px] pr-[4px] pt-[8px]">
      <header className="flex h-[60px] items-center bg-gradient-to-r from-[#99b4d1] to-[#b9d1ea] pl-[12px] pr-[10px]">
        <h2 className="flex-1 whitespace-nowrap text-[35px] leading-[44px]">Create Features</h2>
        <button aria-label="Maximize" className="mr-[18px] h-[23px] w-[24px] border-[3px] border-t-[6px] border-black" />
        <button aria-label="Close Create Features">
          <Cross size={24} />
        </button>
      </header>
      <div className="flex h-[70px] items-center pl-[106px]">
        <Svg size={36}>
          <path d="M1 3H14V15H1Z" fill="#fff" stroke="#333" />
          <path d="M5 0H12V3H5Z" fill="#1c5fb0" />
          <path d="M9 6H12M9 9H12M9 12H12" stroke="#555" />
          <path d="M6 5H8V7H6Z" fill="#2d7dd0" />
          <path d="M6 8H8V10H6Z" fill="#2ba03a" />
          <path d="M6 11H8V13H6Z" fill="#e88b2a" />
        </Svg>
        <div className="ml-[8px] flex h-[52px] flex-1 items-center bg-white">
          <input
            aria-label="Search templates"
            placeholder="<Search>"
            className="h-full w-full min-w-0 flex-1 bg-transparent pl-[9px] text-[28px] outline-none placeholder:text-[#6e6e6e]"
          />
          <button aria-label="Search options" className="flex h-[46px] w-[30px] items-center justify-center bg-[#f5f5f5]">
            <Caret />
          </button>
        </div>
        <button aria-label="Search" className="ml-[10px]">
          <Svg size={40}>
            <circle cx="8" cy="8" r="7.4" fill="#bfe3f8" stroke="#7fb4d8" strokeWidth=".8" />
            <circle cx="7.4" cy="7" r="3.2" fill="#e9f7ff" stroke="#1e76b4" strokeWidth="1.5" />
            <path d="M9.6 9.4L12 12.4" stroke="#1e76b4" strokeWidth="2" />
          </Svg>
        </button>
        <button aria-label="Clear search" className="ml-[16px] mr-[13px]">
          <Svg size={40}>
            <circle cx="8.4" cy="7.6" r="7.2" fill="#dedede" stroke="#cfcfcf" strokeWidth=".8" />
            <circle cx="8.4" cy="6.4" r="3.2" fill="#ececec" stroke="#aaa" strokeWidth="1.3" />
            <path d="M10.6 9L13 12M1.4 9L6.6 14.4M6.6 9L1.4 14.4" stroke="#aaa" strokeWidth="1.8" />
          </Svg>
        </button>
      </div>
      <div className="h-[326px] border-2 border-[#828790] bg-white pl-[40px] pr-[28px] pt-[6px]">
        <div className="flex h-[40px] items-center gap-[10px] text-[#2a3fb0]">
          <span>Mumbai_AOI</span>
          <div className="h-[3px] flex-1 bg-[#dfe5f6]" />
        </div>
        <button className="mt-[8px] h-[40px] border-2 border-[#e2e2e2] bg-[#f6f6f6] px-[6px] font-['Noto_Sans'] text-[26px] leading-[34px]">
          Mumbai_AOI
        </button>
      </div>
      <div className="flex h-[38px] items-center justify-end gap-[3px] border-b-2 border-[#a8a8a8] pr-[2px]">
        <div className="mr-[157px] h-[3px] w-[219px] bg-[#b0b0b0]" />
        <button aria-label="Collapse tools" className="flex size-[28px] items-center justify-center border-[3px] border-black bg-white">
          <Svg size={20}>
            <path d="M2 2L8 7L14 2M2 8L8 13L14 8" fill="none" stroke="#000" strokeWidth="2.4" />
          </Svg>
        </button>
        <button aria-label="Split tools" className="flex size-[28px] items-center justify-center border-[3px] border-black bg-white">
          <span className="h-[14px] w-[2px] bg-black" />
        </button>
      </div>
      <div className="flex h-[65px] items-center">
        <h3 className="flex-1 whitespace-nowrap pl-[50px] pt-[8px] font-['Noto_Sans'] text-[27px] font-bold">Construction Tools</h3>
        <div className="flex h-full w-[50px] flex-col items-center justify-between border-l-2 border-white py-[8px]">
          <Chevron dir="up" size={20} />
          <Chevron dir="down" size={20} />
        </div>
      </div>
    </section>
  );
}

const field = "h-[57px] min-w-0 flex-1 border-2 border-[#abadb3] bg-white px-[11px] pb-[6px] outline-none";
const fieldLabel = "w-[202px] shrink-0 whitespace-nowrap pl-[5px]";

function TemplateProperties() {
  const nameRef = useRef<HTMLInputElement>(null);
  useEffect(() => {
    nameRef.current?.focus();
    nameRef.current?.select();
  }, []);
  return (
    <section
      role="dialog"
      aria-label="Template Properties"
      className="absolute left-[968px] top-[34px] flex w-[1268px] flex-col border border-[#a98443] bg-[#eabd70] font-['Noto_Sans'] text-[25px] text-black"
    >
      <header className="relative flex h-[77px] justify-center">
        <h1 className="pt-[16px] font-['Open_Sans'] text-[35px] leading-[48px] text-[#222]">Template Properties</h1>
        <button aria-label="Close dialog" className="absolute right-[18px] top-0 flex h-[52px] w-[84px] items-center justify-center bg-[#c75050]">
          <Cross size={16} color="#fff" w={2.4} />
        </button>
      </header>
      <div className="mx-[18px] mb-[20px] border border-[#c79b50] bg-[#f0f0f0] pb-[17px] pl-[15px] pr-[18px] pt-[18px]">
        <button role="tab" aria-selected="true" className="relative -mb-[2px] block h-[53px] w-[133px] border-2 border-b-0 border-[#acacac] bg-white pb-[6px]">
          General
        </button>
        <div className="mr-[2px] h-[1381px] border-2 border-[#acacac] bg-white pl-[8px] pr-[51px] pt-[19px]">
          <form className="pl-[5px] pr-[33px]">
            <div className="flex items-center">
              <label htmlFor="tp-name" className={fieldLabel + " pt-[6px]"}>Name:</label>
              <input
                id="tp-name"
                ref={nameRef}
                defaultValue="Mumbai_AOI"
                className="h-[57px] min-w-0 flex-1 border-2 border-[#569de5] bg-white px-[11px] pb-[8px] outline-none selection:bg-[#3399ff] selection:text-white"
              />
            </div>
            <div className="mt-[16px] flex items-center">
              <label htmlFor="tp-desc" className={fieldLabel}>Description:</label>
              <input id="tp-desc" className={field} />
            </div>
            <div className="mt-[22px] flex items-center">
              <label htmlFor="tp-tags" className={fieldLabel}>Tags:</label>
              <input id="tp-tags" defaultValue="Polygon" className={field} />
            </div>
            <div className="mt-[26px] flex h-[202px] items-start">
              <div className="w-[710px]">
                <div className="flex items-center">
                  <label htmlFor="tp-tool" className={fieldLabel + " pb-[8px]"}>Default Tool:</label>
                  <div className="relative flex-1">
                    <select id="tp-tool" className="h-[60px] w-full appearance-none border-2 border-[#abadb3] bg-white pl-[56px] outline-none">
                      <option>Polygon</option>
                    </select>
                    <span className="pointer-events-none absolute left-[11px] top-[6px]">
                      <Svg size={42}>
                        <path d="M1 7.4L6.4 1.6L8.6 2.6L10.4 1.8L14.4 5.4L11.4 8.6L15 11.8L14 14.2L10.6 13.4L8.4 11.4L5.8 13Z" fill="#dcecaa" stroke="#8a8f78" strokeWidth="1.3" />
                      </Svg>
                    </span>
                    <span className="pointer-events-none absolute right-[9px] top-[20px]">
                      <Chevron dir="down" size={22} />
                    </span>
                  </div>
                </div>
                <div className="mt-[20px] flex h-[36px] items-center">
                  <span className={fieldLabel}>Target Layer:</span>
                  <span>Mumbai_AOI</span>
                </div>
                <div className="mt-[26px] flex h-[55px] items-center">
                  <button type="button" aria-label="Categorized" className="flex size-[55px] items-center justify-center border-2 border-[#5aa5ef] bg-[#bcdcfb]">
                    <Svg size={42}>
                      <path d="M.6 8L8 1.2L15.4 8L8 14.8Z" fill="#f3c465" stroke="#a5762a" strokeWidth=".8" />
                      <path d="M5 5H7.4M8.6 5H11M5 7H7.4M8.6 7H11M5 9H7.4M8.6 9H11M5 11H7.4M8.6 11H11" stroke="#1e6ea8" strokeWidth="1.2" />
                    </Svg>
                  </button>
                  <button type="button" aria-label="Sort alphabetically" className="ml-[11px] flex h-[40px] items-center">
                    <span className="flex flex-col text-[20px] font-bold leading-[19px]">
                      <span className="text-[#9dbb8c]">A</span>
                      <span className="text-[#cf9d7a]">Z</span>
                    </span>
                    <svg width="16" height="24" viewBox="0 0 16 24" className="ml-[4px]" aria-hidden="true">
                      <path d="M8 0V16M1 12H15L8 22Z" stroke="#4b8fb8" fill="#4b8fb8" strokeWidth="2" />
                    </svg>
                  </button>
                  <button type="button" className="ml-[20px] flex items-center gap-[12px] font-['Open_Sans'] text-[28px]">
                    View
                    <svg width="18" height="11" viewBox="0 0 18 11" aria-hidden="true">
                      <path d="M0 0H18L9 11Z" fill="#222" />
                    </svg>
                  </button>
                </div>
              </div>
              <fieldset className="-mt-[8px] ml-[71px] h-[168px] w-[244px] border-2 border-[#dcdcdc] px-[12px]">
                <legend className="whitespace-nowrap px-[6px] leading-[34px]">Drawing Symbol</legend>
                <button type="button" aria-label="Drawing Symbol" className="mx-auto mt-[9px] block h-[98px] w-[184px] border-[3px] border-[#111] bg-white" />
              </fieldset>
            </div>
          </form>
          <div className="h-[664px] border-2 border-[#828790] bg-white">
            <table className="w-full border-collapse font-['Open_Sans'] text-[26px]">
              <tbody>
                <tr className="h-[47px] border-b-2 border-[#cdcdcd]">
                  <td className="w-[35px] bg-[#c8c8c8]" />
                  <th scope="row" className="w-[533px] border-r-2 border-[#cdcdcd] pb-[3px] pl-[8px] text-left font-normal">Id</th>
                  <td className="pb-[3px] pl-[8px]">0</td>
                </tr>
              </tbody>
            </table>
          </div>
          <div className="mt-[8px] h-[146px] border-2 border-[#828790] bg-[#f0f0f0]" />
        </div>
        <div className="mt-[20px] flex justify-end gap-[20px]">
          <button className="h-[54px] w-[183px] border-2 border-[#3399ff] bg-gradient-to-b from-[#f0f6fc] to-[#e2eefa]">OK</button>
          <button className="h-[54px] w-[183px] border-2 border-[#acacac] bg-gradient-to-b from-[#f0f0f0] to-[#e5e5e5]">Cancel</button>
          <button disabled className="h-[54px] w-[183px] border-2 border-[#d9d9d9] bg-[#efefef] text-[#8a8a8a]">Apply</button>
        </div>
      </div>
    </section>
  );
}

/* ---------- taskbar ---------- */

const slot = "flex h-full w-[128px] shrink-0 items-center justify-center";
const openSlot = slot + " border-2 border-white/30 bg-white/20";

function Pic({ w, h, children, box }: Kids & { w: number; h: number; box: string }) {
  return (
    <svg width={w} height={h} viewBox={box} preserveAspectRatio="none" aria-hidden="true">
      {children}
    </svg>
  );
}

function TaskbarApps() {
  return (
    <div className="relative flex h-full">
      <button aria-label="Start" className="flex h-full w-[90px] shrink-0 items-center justify-center">
        <Pic w={54} h={52} box="0 0 52 52">
          <path d="M0 7L22 4V24H0ZM24 3.6L52 0V24H24ZM0 26.500H22V49L0 45ZM24 26.500H52V52L24 48.500Z" fill="#fff" />
        </Pic>
      </button>
      <button aria-label="Internet Explorer" className={slot}>
        <Pic w={74} h={70} box="0 0 74 70">
          <defs>
            <radialGradient id="ie"><stop offset="0" stopColor="#a6f1ff" /><stop offset="1" stopColor="#38b6ee" /></radialGradient>
          </defs>
          <path d="M72 44H29C30 54 42 58 51 51L70 51C66 62 54 68 42 68C20 68 8 52 10 34C12 16 26 5 42 5C64 5 76 22 72 44ZM29 32H54C52 20 32 19 29 32Z" fill="url(#ie)" stroke="#2a8fd0" />
          <path d="M70 14C72 5 62 4 48 12C30 22 12 42 9 58C8 66 14 66 22 62C14 70 2 72 2 60C4 42 24 18 46 7C62 -1 74 2 70 14Z" fill="#f9b81f" stroke="#c98a10" />
        </Pic>
      </button>
      <button aria-label="File Explorer" className={slot + " border-2 border-white/30 bg-gradient-to-r from-[#5fa572] via-[#4ce33c] via-60% to-[#7c6d57] to-60%"}>
        <Pic w={72} h={70} box="0 0 72 70">
          <path d="M1 6L5 1H26L30 6V14H50L56 8H68L71 8V66H1Z" fill="#f5df86" stroke="#c9a94a" />
          <path d="M22 14L26 7H46L50 14M38 22L42 14H62L70 20" fill="#fbeeb4" stroke="#c9a94a" />
          <rect x="14" y="3" width="14" height="4" fill="#fff" /><rect x="9" y="3" width="5" height="4" fill="#4aa34a" />
          <rect x="34" y="9" width="14" height="4" fill="#fff" /><rect x="28" y="9" width="5" height="4" fill="#d8602a" />
          <rect x="50" y="15" width="14" height="4" fill="#fff" /><rect x="45" y="15" width="5" height="4" fill="#2b7bd0" />
          <path d="M7 46C7 43 9 43 12 43H60C64 43 65 44 65 47V69H50V60C50 54 24 54 24 60V69H7Z" fill="#8fcbea" stroke="#5aa0c8" />
        </Pic>
      </button>
      <button aria-label="Lenovo App Shop" className={slot}>
        <Pic w={80} h={80} box="0 0 80 80">
          <rect width="80" height="80" rx="12" fill="#2bb2f4" />
          <path d="M66 22L80 40V68Q80 80 68 80H40L16 60Z" fill="#069add" />
          <path d="M13 26L18 20H60L66 26L64 60H15Z" fill="#fff" />
          <path d="M13 26L18 20H60L66 26Z" fill="#d5d5d5" />
          <path d="M28 33C28 50 52 50 52 33" fill="none" stroke="#1aa0e6" strokeWidth="3.500" />
          <circle cx="28" cy="33" r="2" fill="#333" /><circle cx="52" cy="33" r="2" fill="#333" />
        </Pic>
      </button>
      <button aria-label="Adobe" className={slot}>
        <span className="flex size-[80px] flex-col items-center bg-white">
          <Pic w={58} h={52} box="0 0 58 52">
            <path d="M0 1H22L0 50ZM36 1H58V50ZM29 18L43 51H34L30 41H20Z" fill="#e1251b" />
          </Pic>
          <span className="font-['Open_Sans'] text-[20px] font-bold leading-[27px] text-black">Adobe</span>
        </span>
      </button>
      <button aria-label="Music" className={slot}>
        <Pic w={66} h={72} box="0 0 66 72">
          <path d="M4 40C-4 -8 70 -8 62 40" fill="none" stroke="#f6a21c" strokeWidth="7" />
          <path d="M2 34L14 38V62C8 60 2 50 2 34ZM64 34L52 38V62C58 60 64 50 64 34Z" fill="#ee7f1d" />
          <rect x="16" y="31" width="13" height="40" rx="6" fill="#6d6f72" /><rect x="37" y="31" width="13" height="40" rx="6" fill="#6d6f72" />
          <path d="M22 33V69M43 33V69" stroke="#a5a7aa" strokeWidth="2" />
        </Pic>
      </button>
      <button aria-label="Lenovo" className={slot}>
        <span className="flex flex-col items-center">
          <span className="flex h-[64px] w-[80px] flex-col items-center justify-center border-[4px] border-white bg-gradient-to-b from-[#09a0ec] to-[#1b2560]">
            <span className="font-['Open_Sans'] text-[18px] font-bold italic leading-[20px] text-white">lenovo</span>
            <Pic w={68} h={8} box="0 0 68 8">
              <path d="M0 2C20 2 30 6 68 1C40 10 20 6 0 6Z" fill="#e4f2fb" />
            </Pic>
          </span>
          <Pic w={50} h={16} box="0 0 50 16">
            <path d="M12 0H38L40 10L50 16H0L10 10Z" fill="#eee" />
          </Pic>
        </span>
      </button>
      <button aria-label="Chrome" className={openSlot}>
        <Svg size={74} box={48}>
          <circle cx="24" cy="24" r="24" fill="#fbc93c" />
          <path d="M24 24L3.200 12A24 24 0 0 0 22 47.900L34 30Z" fill="#1ea362" />
          <path d="M3.200 12A24 24 0 0 1 45 13H24L14 30Z" fill="#dd4b3e" />
          <circle cx="24" cy="24" r="11" fill="#f1f1f1" />
          <circle cx="24" cy="24" r="8.800" fill="#4688f1" />
        </Svg>
      </button>
      <button aria-label="Store" className={slot}>
        <span className="flex size-[75px] items-center justify-center bg-[#008a00]">
          <Pic w={48} h={54} box="0 0 48 54">
            <path d="M0 16L40 8L48 12V50L40 54L0 46Z" fill="#fff" />
            <path d="M8 14C8 -3 26 -3 28 10M14 13C16 -2 30 -2 32 9" fill="none" stroke="#fff" strokeWidth="2.200" />
            <path d="M8 24L17 22V31H8ZM19 22L30 20V31H19ZM8 33H17V41L8 39ZM19 33H30V44L19 42Z" fill="#008a00" />
          </Pic>
        </span>
      </button>
      <button aria-label="Cube" className={slot}>
        <span className="flex size-[80px] items-center justify-center border-2 border-[#ccc] border-t-[#222] bg-gradient-to-b from-[#e21017] to-[#b00003]">
          <Pic w={48} h={52} box="0 0 48 52">
            <path d="M24 1L46 13V39L24 51L2 39V13ZM6 16L24 25L42 16M24 25V45" fill="none" stroke="#fff" strokeWidth="3.200" />
          </Pic>
        </span>
      </button>
      <button aria-label="Edge" className={slot}>
        <Pic w={80} h={80} box="0 0 80 80">
          <defs>
            <linearGradient id="edgeTop"><stop offset="0" stopColor="#38b8f4" /><stop offset="1" stopColor="#63e05c" /></linearGradient>
          </defs>
          <path d="M1 34C4 12 20 0 40 0C64 0 80 16 80 34C80 48 70 54 60 54C50 54 46 50 48 46C52 40 48 30 40 26C24 12 8 24 1 34Z" fill="url(#edgeTop)" />
          <path d="M1 36C6 16 34 12 46 28C48 32 50 34 44 32C34 30 28 42 34 56C40 68 56 70 72 62C66 74 52 80 40 80C16 80 -2 60 1 36Z" fill="#0f7fd8" />
          <path d="M28 36C18 50 22 72 42 80C56 80 68 72 74 61C58 68 38 66 34 50C32 42 34 34 40 32C36 30 30 32 28 36Z" fill="#0d4f9c" />
        </Pic>
      </button>
      <button aria-label="QGIS" className={openSlot}>
        <Pic w={78} h={74} box="0 0 78 74">
          <path d="M38 1A37 35 0 1 0 52 69L46 59A22 24 0 1 1 58 46L68 56A37 35 0 0 0 38 1Z" fill="#7aab26" />
          <path d="M32 30H44L48 40V50L32 38Z" fill="#f47b20" />
          <path d="M40 38H52L54 48L44 52Z" fill="#f3e04a" />
          <path d="M46 44H58L77 62V73H68L46 52Z" fill="#5da043" />
        </Pic>
      </button>
      <button aria-label="Visual Studio Code" className={openSlot}>
        <Pic w={80} h={80} box="0 0 80 80">
          <path d="M60 2V24L14 60Q10 62 7 59L2 54Q0 51 2 49Z" fill="#0a70b8" />
          <path d="M2 31Q0 28 3 25L8 20Q11 18 14 20L60 56V79Z" fill="#1389d2" />
          <path d="M58 0L76 8Q80 10 80 14V66Q80 70 76 72L58 80Z" fill="#2aa5f2" />
        </Pic>
      </button>
      <button aria-label="ArcMap" className={slot + " border-2 border-white/90 bg-[#9a8e7c]"}>
        <ArcGlobe size={78} id="tb" />
      </button>
    </div>
  );
}

function Tray() {
  return (
    <div className="flex h-full items-center">
      <button aria-label="Touch keyboard">
        <Pic w={60} h={36} box="0 0 60 36">
          <rect x="1" y="1" width="58" height="34" rx="4" fill="#fff" stroke="#222" />
          <path d="M6 6H54V30H6Z" fill="#222" />
          <path d="M8 10H52M8 17H52" stroke="#fff" strokeWidth="5" strokeDasharray="5.500 2" />
          <path d="M8 25H15M18 25H42M45 25H52" stroke="#fff" strokeWidth="6" />
        </Pic>
      </button>
      <div className="ml-[34px] flex items-center pb-[2px]">
        <div className="h-[50px] w-[102px] border-4 border-white bg-[#444] p-[3px]">
          <div className="flex h-full w-[80px] items-center justify-center bg-[#08cf68] pl-[12px] text-[28px] leading-[34px] text-white">89%</div>
        </div>
        <div className="h-[24px] w-[7px] bg-white" />
      </div>
      <button aria-label="Show hidden icons" className="ml-[73px] mt-[46px]">
        <Pic w={18} h={12} box="0 0 18 12"><path d="M9 0L18 12H0Z" fill="#eee" /></Pic>
      </button>
      <div className="ml-[70px]">
        <Svg size={40} box={40}>
          <circle cx="20" cy="20" r="19" fill="#6d6d6d" />
          <circle cx="20" cy="20" r="11.500" fill="none" stroke="#fff" strokeWidth="3" />
          <circle cx="20" cy="20" r="14" fill="none" stroke="#fff" strokeWidth="2" strokeDasharray="2 1.500" />
          <path d="M20 20V31M20 20L11 13M20 20L29 13" stroke="#fff" strokeWidth="3" />
        </Svg>
      </div>
      <div className="ml-[20px]">
        <Pic w={42} h={42} box="0 0 42 42">
          <path d="M1 2H6V40H1Z" fill="#fff" stroke="#222" />
          <path d="M6 3C14 0 18 4 24 6C30 9 34 8 38 8L34 24C26 26 18 18 6 22Z" fill="#fff" stroke="#222" />
          <circle cx="30" cy="31" r="10" fill="#d8111a" />
          <path d="M26 27L34 35M34 27L26 35" stroke="#fff" strokeWidth="3" />
        </Pic>
      </div>
      <div className="ml-[17px]">
        <Pic w={42} h={32} box="0 0 42 32">
          <g fill="#fff" stroke="#555">
            <path d="M1 25H8V31H1ZM9 20H16V31H9ZM17 14H24V31H17ZM25 7H32V31H25Z" />
            <path d="M33 1H41V31H33Z" fill="#777" />
          </g>
        </Pic>
      </div>
      <div className="ml-[16px]">
        <Pic w={42} h={40} box="0 0 42 40">
          <path d="M1 12H8L18 2V38L8 28H1Z" fill="#fff" stroke="#333" strokeWidth="2" />
          <path d="M23 14C26 18 26 22 23 26M29 10C34 16 34 24 29 30M35 6C42 14 42 26 35 34" fill="none" stroke="#fff" strokeWidth="2.500" />
        </Pic>
      </div>
      <span className="ml-[28px] pt-[6px] text-[28px] text-white">ENG</span>
      <time className="ml-[34px] w-[152px] pt-[8px] text-center text-[28px] leading-[41px] text-white">
        18:19
        <br />
        27/03/2021
      </time>
    </div>
  );
}

function Taskbar() {
  return (
    <nav className="absolute inset-x-0 bottom-0 h-[88px]">
      <div className="absolute inset-0 flex">
        <div className="relative flex-1 overflow-hidden border-t-2 border-[#9c8b6d] bg-[#5b4a2d]">
          <svg viewBox="0 0 700 86" width="700" height="86" className="absolute left-[1050px] top-0" aria-hidden="true">
            <defs><filter id="wp"><feGaussianBlur stdDeviation="3" /></filter></defs>
            <g filter="url(#wp)">
              <path d="M10 0H520L600 86H360L300 50L190 86L170 60L60 20Z" fill="#9a6028" />
              <path d="M90 0H330L250 40L130 30Z" fill="#b87426" />
              <path d="M20 10L80 20L100 86H60Z" fill="#5f5630" />
              <path d="M330 0H500L590 86H420Z" fill="#8d4a30" />
              <path d="M0 10C60 30 70 60 90 86" stroke="#8f7430" strokeWidth="8" fill="none" />
              <path d="M180 50C260 50 280 70 350 86" stroke="#3a2a18" strokeWidth="10" fill="none" />
              <path d="M400 0L520 40L470 60L380 20Z" fill="#5b5a3a" />
              <path d="M580 0L560 86" stroke="#9a8236" strokeWidth="8" />
            </g>
          </svg>
        </div>
        <div className="w-[416px] border-t-2 border-[#a08a60]/70 bg-[#8a6624]/50" />
      </div>
      <div className="relative flex h-full justify-between pr-[30px]">
        <TaskbarApps />
        <Tray />
      </div>
    </nav>
  );
}

/* ---------- page ---------- */

const menus = ["File", "Edit", "View", "Bookmarks", "Insert", "Selection", "Geoprocessing"];

export default function App() {
  return (
    <div className="relative flex h-screen w-full flex-col overflow-hidden bg-[#f0f0f0] font-['Open_Sans','Noto_Sans',sans-serif] text-[28px] text-black">
      <header className="flex h-[60px] shrink-0 items-start justify-between border-b-2 border-[#ece2cf] bg-[#ebebeb]">
        <div className="w-[300px] pl-[2px] pt-[9px]">
          <ArcGlobe size={40} id="tl" />
        </div>
        <div className="pt-[7px] text-[36px] leading-[48px] text-[#222]">Untitled - ArcMap</div>
        <div className="flex h-[50px] w-[300px] justify-end pr-[2px]">
          <button aria-label="Minimize" className="w-[66px] pt-[9px]">
            <span className="mx-auto block h-[4px] w-[17px] bg-[#222]" />
          </button>
          <button aria-label="Restore" className="flex w-[68px] items-center justify-center">
            <Svg size={18}>
              <path d="M4 4V1H15V11H12" fill="none" stroke="#222" strokeWidth="2" />
              <path d="M1 5H12V15H1Z" fill="none" stroke="#222" strokeWidth="2" />
              <path d="M1 6H12" stroke="#222" strokeWidth="3" />
            </Svg>
          </button>
          <button aria-label="Close" className="flex w-[117px] items-center justify-center bg-[#bcbcbc]">
            <Cross size={16} color="#fff" w={2.2} />
          </button>
        </div>
      </header>
      <div className="flex min-h-0 flex-1">
        <div className="flex min-w-0 flex-1 flex-col pb-[141px]">
          <nav className="flex h-[62px] shrink-0 items-center gap-[40px] bg-[#f2f2f2] pb-[3px] pl-[31px]">
            {menus.map((m) => (
              <button key={m}>{m}</button>
            ))}
          </nav>
          <Toolbar items={standardTools}>
            <input aria-label="Map scale" defaultValue="1:600,000" className="h-[52px] w-[400px] border-2 border-[#abadb3] bg-white px-[6px] pb-[6px] text-[27px] outline-none" />
          </Toolbar>
          <Toolbar items={navTools} />
          <div className="flex min-h-0 flex-1 gap-[12px]">
            <TableOfContents />
            <main className="flex min-w-0 flex-1 flex-col">
              <div className="min-h-0 flex-1 border-l-2 border-t-4 border-[#808080]">
                <MapImage />
              </div>
              <ViewBar />
            </main>
          </div>
        </div>
        <ArcToolbox />
      </div>
      <CreateFeatures />
      <TemplateProperties />
      <Taskbar />
    </div>
  );
}
